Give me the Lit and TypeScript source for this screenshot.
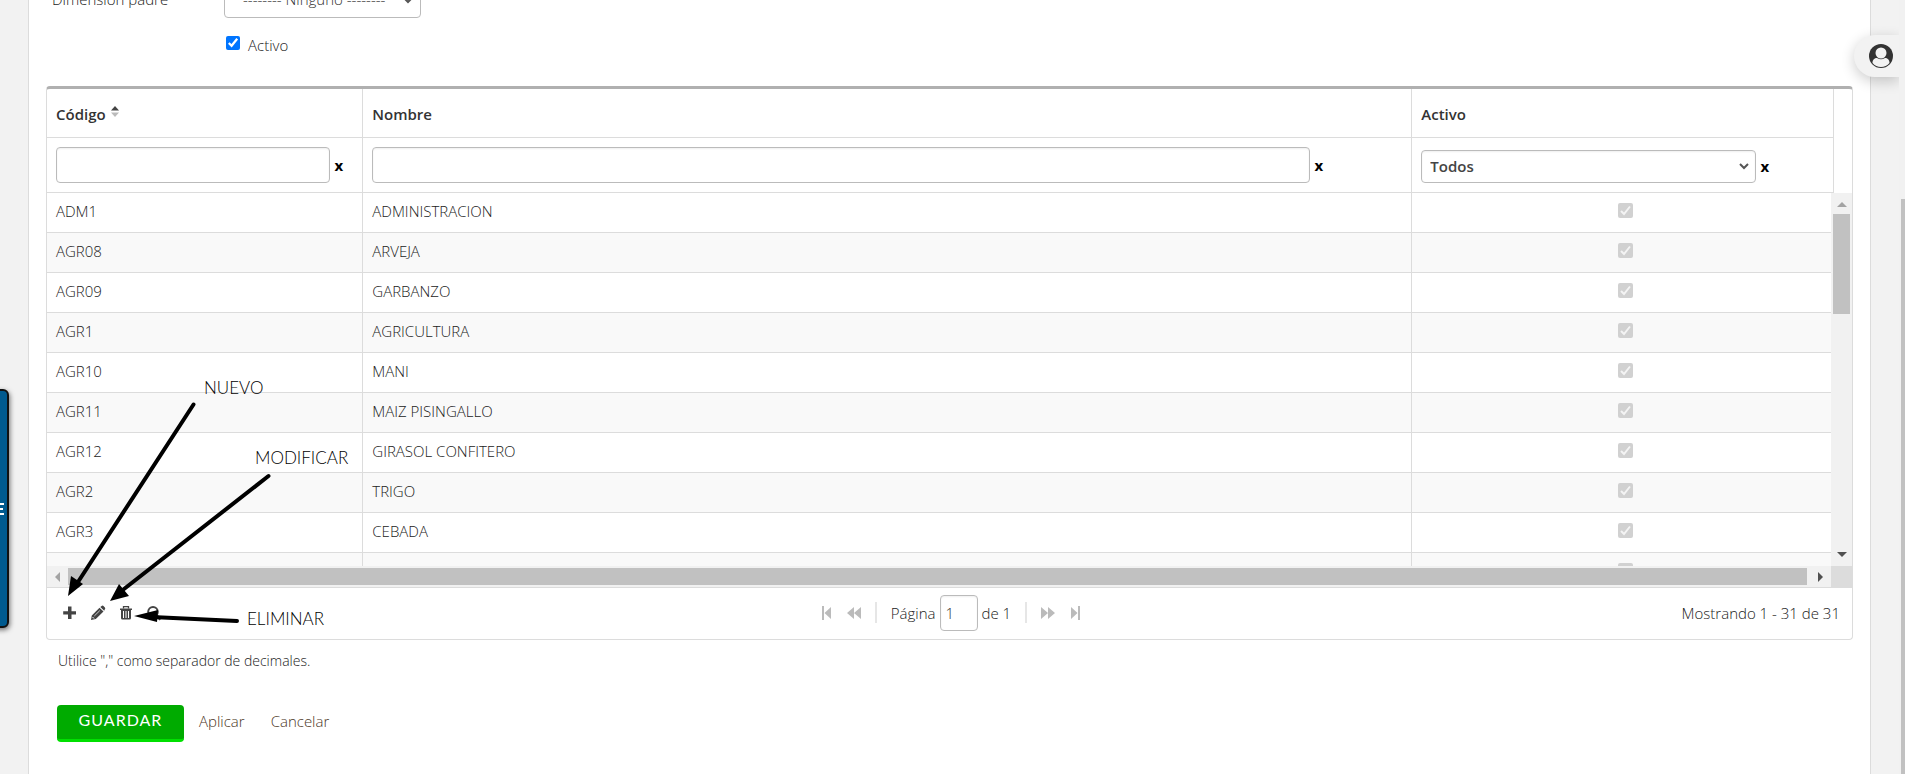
import { LitElement, html, css } from "lit";
import { customElement } from "lit/decorators.js";

const ROWS: [string, string][] = [
  ["ADM1", "ADMINISTRACION"],
  ["AGR08", "ARVEJA"],
  ["AGR09", "GARBANZO"],
  ["AGR1", "AGRICULTURA"],
  ["AGR10", "MANI"],
  ["AGR11", "MAIZ PISINGALLO"],
  ["AGR12", "GIRASOL CONFITERO"],
  ["AGR2", "TRIGO"],
  ["AGR3", "CEBADA"],
  ["", ""],
];

@customElement("dimension-grid")
class DimensionGrid extends LitElement {
  static styles = css`
    :host { display: block; color: #222; }
    * { box-sizing: border-box; }
    .box {
      border: 1px solid #dcdcdc;
      border-top: 3px solid #b0b0b0;
      border-radius: 4px;
      overflow: hidden;
    }
    table { width: 100%; border-collapse: separate; border-spacing: 0; table-layout: fixed; }
    .code { width: 17.7%; }
    .active { width: 23.6%; }
    .head { padding-right: 18px; }
    .head th { height: 49px; padding: 2px 9px 0; text-align: left; font-weight: 600; line-height: 20px; color: #333; }
    .head td { height: 55px; padding: 0 9px; }
    th, td { border-right: 1px solid #dcdcdc; border-bottom: 1px solid #dcdcdc; }
    .sort { display: inline-block; vertical-align: 3px; margin-left: 1px; }
    .filter { display: flex; align-items: center; gap: 5px; }
    .field {
      width: 92%;
      height: 36px;
      border: 1px solid #bbb;
      border-radius: 4px;
      background: #fff;
      box-shadow: inset 0 1px 2px #0001;
      font: inherit;
      color: #333;
      padding: 0 8px;
    }
    .name .field { width: 91%; }
    .pick { position: relative; width: 83%; display: flex; }
    .filter.choice { gap: 5px; padding-top: 2px; }
    .pick select { appearance: none; width: 100%; height: 33px; font-weight: 600; color: #444; }
    .pick svg { position: absolute; right: 7px; top: 13px; }
    .clear { border: 0; padding: 0; background: none; font: inherit; font-weight: 700; color: #000; line-height: 20px; }
    .body { display: grid; grid-template-columns: 1fr 21px; }
    .view { height: 373px; overflow: hidden; }
    .view table { width: calc(100% + 3px); }
    .view td { height: 40px; padding: 0 9px 3px; line-height: 20px; }
    .view tr:nth-child(even) td { background: #f9f9f9; }
    .view .tick { text-align: center; padding: 0 0 6px 6px; line-height: 15px; }
    .tick input { width: 15px; height: 15px; margin: 0; appearance: none; border-radius: 2px; background: #d1d1d1; }
    .mark { display: inline-grid; vertical-align: middle; }
    .mark > * { grid-area: 1 / 1; }
    .mark svg { z-index: 1; pointer-events: none; }
    .bar { background: #f1f1f1; display: flex; align-items: center; }
    .down { flex-direction: column; padding: 9px 0; gap: 7px; }
    .down .thumb { width: 17px; height: 100px; }
    .fill { flex: 1; }
    .across { height: 21px; padding: 0 8px; }
    .across .thumb { height: 17px; flex: 1; margin: 0 11px 0 8px; }
    .thumb { background: #c1c1c1; }
    .corner { background: #dcdcdc; }
    .foot {
      display: grid;
      grid-template-columns: 1fr auto 1fr;
      align-items: center;
      height: 52px;
      border-top: 1px solid #dcdcdc;
      padding: 0 12px 2px 15px;
      line-height: 20px;
    }
    .tools { display: flex; gap: 12px; }
    .tool { border: 0; background: none; padding: 0; width: 16px; height: 16px; color: #444; display: block; }
    .pager { display: flex; align-items: center; }
    .nav { border: 0; background: none; padding: 0; height: 14px; color: #bbb; display: block; }
    .sep { width: 2px; height: 21px; background: #e6e6e6; margin: 0 14px; }
    .page { display: flex; align-items: center; gap: 4px; }
    .page .field { width: 38px; padding: 0 5px; }
    .nav + .nav { margin-left: 16px; }
    .total { text-align: right; }
  `;

  arrow(d: string, w: number, h: number, color: string) {
    return html`<svg width=${w} height=${h} viewBox="0 0 ${w} ${h}"><path d=${d} fill=${color} /></svg>`;
  }

  render() {
    return html`
      <div class="box">
        <div class="head">
          <table>
            <colgroup><col class="code" /><col /><col class="active" /></colgroup>
            <thead>
              <tr>
                <th scope="col">Código
                  <svg class="sort" width="8" height="11" viewBox="0 0 8 11">
                    <path d="M4 0 8 4.500H0z" fill="#444" /><path d="M4 11 8 6.500H0z" fill="#bbb" />
                  </svg>
                </th>
                <th scope="col">Nombre</th>
                <th scope="col">Activo</th>
              </tr>
              <tr>
                <td><div class="filter"><input class="field" aria-label="Código" /><button class="clear">x</button></div></td>
                <td class="name"><div class="filter"><input class="field" aria-label="Nombre" /><button class="clear">x</button></div></td>
                <td>
                  <div class="filter choice">
                    <span class="pick">
                      <select class="field" aria-label="Activo"><option>Todos</option></select>
                      <svg width="10" height="7" viewBox="0 0 10 7"><path d="M1 1 5 5 9 1" fill="none" stroke="#555" stroke-width="2" /></svg>
                    </span>
                    <button class="clear">x</button>
                  </div>
                </td>
              </tr>
            </thead>
          </table>
        </div>
        <div class="body">
          <div class="view">
            <table>
              <colgroup><col class="code" /><col /><col class="active" /></colgroup>
              <tbody>
                ${ROWS.map(
                  ([code, name]) => html`<tr>
                    <td>${code}</td>
                    <td>${name}</td>
                    <td class="tick">
                      <span class="mark">
                        <input type="checkbox" checked disabled aria-label="Activo" />
                        <svg width="15" height="15" viewBox="0 0 15 15"><path d="M3 8 6 11 12 3.500" fill="none" stroke="#f4f4f4" stroke-width="2" /></svg>
                      </span>
                    </td>
                  </tr>`
                )}
              </tbody>
            </table>
          </div>
          <div class="bar down">
            ${this.arrow("M5 0 10 5H0z", 10, 5, "#a3a3a3")}
            <div class="thumb"></div>
            <div class="fill"></div>
            ${this.arrow("M5 5 10 0H0z", 10, 5, "#505050")}
          </div>
          <div class="bar across">
            ${this.arrow("M0 5 5 0V10z", 5, 10, "#a3a3a3")}
            <div class="thumb"></div>
            ${this.arrow("M5 5 0 0V10z", 5, 10, "#505050")}
          </div>
          <div class="corner"></div>
        </div>
        <div class="foot">
          <div class="tools">
            <button class="tool" aria-label="Nuevo"><svg width="16" height="16" viewBox="0 0 16 16"><path d="M6 1.500h3.500V6.300h4.500V9.600H9.500v4.400H6V9.600H1.200V6.300H6z" fill="currentColor" /></svg></button>
            <button class="tool" aria-label="Modificar"><svg width="16" height="16" viewBox="0 0 16 16"><path d="M9.500 2.800 13.500 6.500 5.800 14 1 15 1.800 10.500zM10.300 2 12 .8q.8-.5 1.500.2l1.400 1.400q.8.8.1 1.600L14.200 5.700z" fill="currentColor" /><path d="m4.300 11 5.500-5.400" stroke="#fff" stroke-width=".7" /><path d="m2.500 12 1.500 1.500" stroke="#fff" /></svg></button>
            <button class="tool" aria-label="Eliminar"><svg width="16" height="16" viewBox="0 0 16 16"><path d="M2 3.500h12v1.400h-1V13q0 1.500-1.500 1.500h-7Q3 14.500 3 13V4.900H2z" fill="currentColor" /><path d="M5.500 3.500V1.700h5v1.800" fill="none" stroke="currentColor" stroke-width="1.300" /><path d="M5.500 6v7M8 6v7M10.500 6v7" stroke="#fff" stroke-width="1" /></svg></button>
            <button class="tool" aria-label="Buscar"><svg width="16" height="16" viewBox="0 0 16 16"><circle cx="7" cy="6.800" r="4.800" fill="none" stroke="currentColor" stroke-width="2" /><path d="m10.500 10.500 4 4" stroke="currentColor" stroke-width="2.600" /></svg></button>
          </div>
          <div class="pager">
            <button class="nav" aria-label="Primera">${this.arrow("M0 0H2V14H0zM9 1V13L2.500 7z", 9, 14, "#bbb")}</button>
            <button class="nav" aria-label="Anterior">${this.arrow("M7 1V13L0 7zM14 1V13L7 7z", 14, 14, "#bbb")}</button>
            <span class="sep"></span>
            <label class="page">Página <input class="field" value="1" /> de 1</label>
            <span class="sep"></span>
            <button class="nav" aria-label="Siguiente">${this.arrow("M0 1V13L7 7zM7 1V13L14 7z", 14, 14, "#bbb")}</button>
            <button class="nav" aria-label="Última">${this.arrow("M7 0H9V14H7zM0 1V13L6.500 7z", 9, 14, "#bbb")}</button>
          </div>
          <div class="total">Mostrando 1 - 31 de 31</div>
        </div>
      </div>
    `;
  }
}

@customElement("app-root")
class AppRoot extends LitElement {
  static styles = css`
    :host {
      display: block;
      position: relative;
      height: 100vh;
      overflow: hidden;
      background: #f2f2f2;
      color: #222;
      font: 340 15px/20px "Open Sans", sans-serif;
    }
    * { box-sizing: border-box; }
    .panel {
      display: flow-root;
      min-height: 100%;
      margin: 0 34px 0 28px;
      padding: 0 17px;
      border: solid #dcdcdc;
      border-width: 0 1px;
      background: #fff;
    }
    .form { margin-top: -20px; display: grid; grid-template-columns: 172px auto; justify-content: start; padding-left: 6px; }
    .pick { position: relative; }
    .pick select {
      appearance: none;
      width: 197px;
      height: 38px;
      border: 1px solid #bbb;
      border-radius: 4px;
      background: #fff;
      color: #333;
      font: inherit;
      padding: 0 18px;
      display: block;
    }
    .pick svg { position: absolute; right: 8px; top: 17px; }
    .form label { padding-top: 9px; }
    .form .check { grid-column: 2; display: flex; gap: 8px; padding: 17px 2px 0; }
    .check input { width: 14px; height: 14px; margin: 1px 0 0; accent-color: #0075ff; }
    dimension-grid { margin-top: 31px; }
    .note { margin: 11px 12px 0; font-size: 14px; }
    .actions { display: flex; margin: 34px 11px 0; }
    .save {
      width: 127px;
      height: 37px;
      border: 0;
      border-bottom: 3px solid #00e000;
      border-radius: 4px;
      background: #00ab00;
      color: #fff;
      font: 16px/20px Lato, sans-serif;
      letter-spacing: 1px;
      padding: 0 0 4px;
    }
    .actions a { color: #4b3626; text-decoration: none; padding-top: 6px; margin-left: 15px; }
    .actions a + a { margin-left: 26px; }
    .side {
      position: absolute;
      left: -24px;
      top: 389px;
      width: 33px;
      height: 239px;
      padding: 0;
      border: 2px solid #111;
      border-radius: 6px;
      background: #005a8f;
      box-shadow: 1px 2px 5px #0008;
    }
    .side svg { display: block; margin-left: auto; margin-right: 3px; }
    .user {
      position: absolute;
      right: 6px;
      top: 35px;
      width: 45px;
      height: 42px;
      border: 0;
      padding: 0 0 0 15px;
      border-radius: 21px 0 0 21px;
      background: #f2f2f2;
      box-shadow: 0 4px 14px #0003;
    }
    .user svg { display: block; }
    .scroll { position: absolute; right: 0; top: 0; width: 6px; height: 100%; background: #f1f1f1; padding: 199px 0 0 2px; }
    .scroll div { background: #c1c1c1; height: 100%; }
    .notes { position: absolute; left: 0; top: 360px; pointer-events: none; fill: #000; font: 300 17px Lato, sans-serif; }
  `;

  render() {
    return html`
      <main class="panel">
        <div class="form">
          <label for="parent">Dimensión padre</label>
          <div class="pick">
            <select id="parent"><option>-------- Ninguno --------</option></select>
            <svg width="10" height="7" viewBox="0 0 10 7"><path d="M1 1 5 5 9 1" fill="none" stroke="#555" stroke-width="2" /></svg>
          </div>
          <label class="check"><input type="checkbox" checked /><span>Activo</span></label>
        </div>
        <dimension-grid></dimension-grid>
        <p class="note">Utilice "," como separador de decimales.</p>
        <div class="actions">
          <button class="save">GUARDAR</button>
          <a href="#">Aplicar</a>
          <a href="#">Cancelar</a>
        </div>
      </main>
      <button class="side" aria-label="Menú">
        <svg width="8" height="12" viewBox="0 0 8 12"><path d="M0 1H8M0 6H7M0 11H8" stroke="#fff" stroke-width="2" /></svg>
      </button>
      <button class="user" aria-label="Usuario">
        <svg width="24" height="24" viewBox="0 0 24 24">
          <circle cx="12" cy="12" r="12" fill="#333" />
          <path d="M3.500 19C3.500 15.500 5.500 14 8 14q4 2.500 8 0c2.500 0 4.500 1.500 4.500 5A11 11 0 0 1 3.500 19z" fill="#f2f2f2" />
          <circle cx="12" cy="9" r="5.500" fill="#f2f2f2" />
        </svg>
      </button>
      <div class="scroll"><div></div></div>
      <svg class="notes" width="400" height="290" viewBox="0 0 400 290">
        <g stroke="#000" stroke-width="4" stroke-linecap="round">
          <path d="M193.500 44.500 78 222" /><path d="M268.500 116 124 229" /><path d="M237 261 152 257" />
        </g>
        <path d="M68 236 71 216 83 224z M110 241 119 224 129 236z M134 256 158 250 157 262z" />
        <text x="204" y="34">NUEVO</text>
        <text x="255" y="104">MODIFICAR</text>
        <text x="247" y="265">ELIMINAR</text>
      </svg>
    `;
  }
}
